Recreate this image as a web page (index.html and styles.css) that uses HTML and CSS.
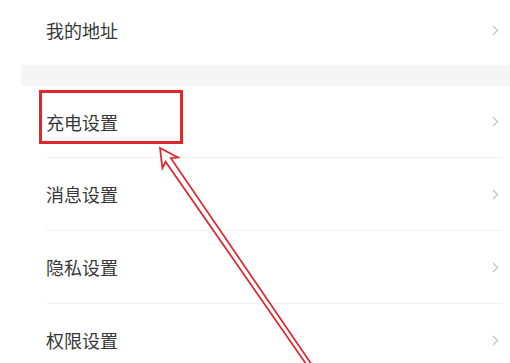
FILE: index.html
```html
<!DOCTYPE html>
<html lang="zh-CN">
<head>
<meta charset="utf-8">
<title>设置</title>
<link rel="stylesheet" href="styles.css">
</head>
<body>
<div class="page">
  <div class="group">
    <div class="row first">
      <span class="label">我的地址</span>
      <svg class="chev" width="7" height="11" viewBox="0 0 7 11"><polyline points="1,1 5.5,5.5 1,10" fill="none" stroke="#c2c2c2" stroke-width="1.2"/></svg>
    </div>
  </div>
  <div class="band"></div>
  <div class="group">
    <div class="row second">
      <span class="label">充电设置</span>
      <svg class="chev" width="7" height="11" viewBox="0 0 7 11"><polyline points="1,1 5.5,5.5 1,10" fill="none" stroke="#c2c2c2" stroke-width="1.2"/></svg>
    </div>
    <div class="row">
      <span class="label">消息设置</span>
      <svg class="chev" width="7" height="11" viewBox="0 0 7 11"><polyline points="1,1 5.5,5.5 1,10" fill="none" stroke="#c2c2c2" stroke-width="1.2"/></svg>
    </div>
    <div class="row">
      <span class="label">隐私设置</span>
      <svg class="chev" width="7" height="11" viewBox="0 0 7 11"><polyline points="1,1 5.5,5.5 1,10" fill="none" stroke="#c2c2c2" stroke-width="1.2"/></svg>
    </div>
    <div class="row last">
      <span class="label">权限设置</span>
      <svg class="chev" width="7" height="11" viewBox="0 0 7 11"><polyline points="1,1 5.5,5.5 1,10" fill="none" stroke="#c2c2c2" stroke-width="1.2"/></svg>
    </div>
  </div>

  <div class="highlight"></div>
  <svg class="arrow" width="510" height="363" viewBox="0 0 510 363">
    <g transform="translate(160 148) rotate(55.45)">
      <polygon points="0,0 18,-9.5 14.5,-3.2 300,-2 300,2 14.5,3.2 18,9.5" fill="#ffffff" stroke="#e0252c" stroke-width="1.7" stroke-linejoin="miter"/>
    </g>
  </svg>
</div>
</body>
</html>
```
FILE: styles.css
```css
html, body {
  margin: 0;
  padding: 0;
  background: #ffffff;
}

.page {
  position: relative;
  width: 510px;
  height: 363px;
  overflow: hidden;
  font-family: "Noto Sans CJK SC", "Noto Sans", sans-serif;
  color: #383838;
}

.group {
  display: flex;
  flex-direction: column;
}

.row {
  display: flex;
  align-items: center;
  justify-content: space-between;
  margin-left: 46px;
  margin-right: 8px;
  padding-right: 3px;
  height: 72px;
  border-bottom: 1px solid #f0f0f0;
  box-sizing: content-box;
}

.row.first {
  height: 60px;
  padding-bottom: 5px;
  border-bottom: none;
}

.row.second {
  height: 71px;
}

.row.last {
  border-bottom: none;
}

.label {
  font-size: 18px;
  line-height: 20px;
  letter-spacing: 0;
}

.chev {
  display: block;
}

.band {
  height: 21px;
  margin-left: 21px;
  background: #f5f5f5;
}

.highlight {
  position: absolute;
  left: 39px;
  top: 90px;
  width: 144px;
  height: 54px;
  box-sizing: border-box;
  border: 3px solid #e0252c;
}

.arrow {
  position: absolute;
  left: 0;
  top: 0;
  pointer-events: none;
}
```
